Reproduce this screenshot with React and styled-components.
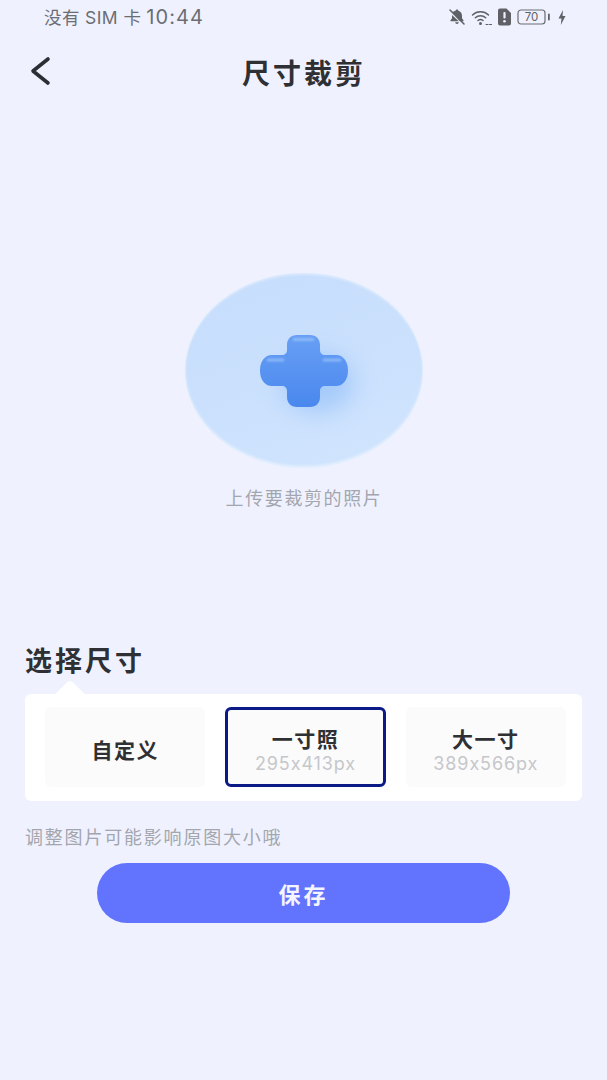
import React, { useState } from 'react';
import styled, { createGlobalStyle } from 'styled-components';

const GlobalStyle = createGlobalStyle`
    html, body {
        margin: 0;
        padding: 0;
        background: #eff2fe;
    }
    * {
        box-sizing: border-box;
    }
`;

const Page = styled.div`
    width: 607px;
    height: 1080px;
    overflow: hidden;
    background: #eff2fe;
    font-family: "Noto Sans CJK SC", "Inter", sans-serif;
    color: #2f3033;
`;

const StatusBar = styled.div`
    height: 34px;
    padding: 0 41px 0 44px;
    display: flex;
    align-items: center;
    justify-content: space-between;
    color: #6b6d73;
`;

const StatusText = styled.div`
    display: flex;
    align-items: baseline;
    gap: 5px;
    padding-bottom: 2px;
    font-size: 17.5px;
    letter-spacing: 0.4px;
    font-family: "Inter", "Noto Sans CJK SC", sans-serif;
`;

const Clock = styled.span`
    font-size: 20px;
    letter-spacing: 1.1px;
`;

const StatusIcons = styled.div`
    display: flex;
    align-items: center;
    gap: 5px;
`;

const Header = styled.header`
    height: 77px;
    display: flex;
    align-items: center;
    justify-content: center;
    position: relative;
`;

const BackButton = styled.button`
    position: absolute;
    left: 29px;
    top: 21px;
    padding: 0;
    border: none;
    background: none;
    display: flex;
    color: #2c2e33;
`;

const Title = styled.h1`
    margin: 0 0 2px;
    font-size: 28px;
    line-height: 40px;
    font-weight: 700;
    letter-spacing: 3px;
    padding-left: 1px;
    color: #2f3033;
`;

const Upload = styled.section`
    margin-top: 162px;
    display: flex;
    flex-direction: column;
    align-items: center;
`;

const UploadCircle = styled.button`
    width: 238px;
    height: 195px;
    padding: 0;
    border: none;
    border-radius: 50%;
    display: flex;
    align-items: center;
    justify-content: center;
    background: linear-gradient(160deg, #c6ddfc 0%, #cbe1fd 60%, #d2e5fe 100%);
    box-shadow: inset 0 -2px 3px rgba(255, 255, 255, 0.5), inset 0 2px 2px rgba(255, 255, 255, 0.35);
`;

const PlusSvg = styled.svg`
    overflow: visible;
`;

const UploadHint = styled.p`
    margin: 17px 0 0;
    font-size: 18px;
    line-height: 24px;
    letter-spacing: 1.6px;
    padding-left: 1px;
    color: #a3a6ae;
`;

const SizeSection = styled.section`
    margin-top: 134px;
    padding: 0 25px;
`;

const SectionTitle = styled.h2`
    margin: 0;
    font-size: 27px;
    line-height: 34px;
    font-weight: 700;
    letter-spacing: 3px;
    color: #2f3033;
`;

const SizeCard = styled.div`
    margin-top: 17px;
    position: relative;
    height: 107px;
    padding: 13px 16px 14px 20px;
    display: grid;
    grid-template-columns: repeat(3, 1fr);
    gap: 20px;
    background: #fff;
    border-radius: 6px;

    &::before {
        content: '';
        position: absolute;
        left: 31px;
        top: -9px;
        width: 28px;
        height: 28px;
        background: #fff;
        border-radius: 5px;
        transform: rotate(45deg);
    }
`;

const SizeTile = styled.button`
    position: relative;
    padding: 7px 0 0;
    font-family: inherit;
    display: flex;
    flex-direction: column;
    align-items: center;
    justify-content: center;
    background: #fbfbfb;
    border-radius: 6px;
    border: 3px solid ${(p) => (p.$active ? '#0b1a86' : 'transparent')};
`;

const SizeName = styled.span`
    font-family: "Inter", "Noto Sans CJK SC", sans-serif;
    font-size: 21px;
    line-height: 25px;
    font-weight: 700;
    letter-spacing: 1.5px;
    color: #2f3033;
`;

const SizeValue = styled.span`
    margin-top: 1px;
    font-family: "Inter", sans-serif;
    font-size: 18px;
    line-height: 22px;
    letter-spacing: 0.9px;
    color: #c6c7cb;
`;

const Note = styled.p`
    margin: 23px 0 0;
    font-size: 18px;
    line-height: 24px;
    letter-spacing: 1.8px;
    color: #a3a6ae;
`;

const SaveButton = styled.button`
    display: block;
    width: 413px;
    height: 60px;
    margin: 15px auto 0;
    border: none;
    border-radius: 30px;
    background: #6274fd;
    color: #f4f5ff;
    font-family: inherit;
    font-size: 22px;
    font-weight: 700;
    letter-spacing: 3px;
`;

const BellOffIcon = () => (
    <svg width="18" height="18" viewBox="0 0 18 18">
        <path d="M9 1.500c.8 0 1.300.5 1.400 1.200 2.200.6 3.600 2.500 3.600 5v2.600l1.500 2v.9H12L4.200 4.600C5 3.600 6.200 3 7.600 2.700 7.700 2 8.200 1.500 9 1.500z" fill="#5f6166" />
        <path d="M4 7l6.800 6.200H2.500v-.9L4 10.300z" fill="#5f6166" />
        <path d="M7.200 14.200h3.600a1.800 1.800 0 0 1-3.600 0z" fill="#5f6166" />
        <path d="M2 2l14 14" stroke="#5f6166" strokeWidth="1.500" strokeLinecap="round" />
    </svg>
);

const WifiIcon = () => (
    <svg width="21" height="17" viewBox="0 0 21 17" fill="none" stroke="#5f6166" strokeWidth="1.500" strokeLinecap="round">
        <path d="M1.500 6C6 1.700 13 1.700 17.500 6" />
        <path d="M4.300 8.800c3-2.800 7.400-2.800 10.400 0" />
        <path d="M7 11.500c1.500-1.300 3.500-1.300 5 0" />
        <circle cx="9.500" cy="14.500" r="1.500" fill="#5f6166" stroke="none" />
        <path d="M15 15.500h2M18.500 15.500h2" strokeWidth="1.200" />
    </svg>
);

const AlertIcon = () => (
    <svg width="15" height="18" viewBox="0 0 15 18">
        <path d="M3 .5h6.500L14 5v10.500a2 2 0 0 1-2 2H3a2 2 0 0 1-2-2v-13a2 2 0 0 1 2-2z" fill="#5f6166" />
        <rect x="6.400" y="4" width="2.200" height="6.500" rx="1" fill="#eff2fe" />
        <circle cx="7.500" cy="13.300" r="1.300" fill="#eff2fe" />
    </svg>
);

const BatteryIcon = () => (
    <svg width="36" height="16" viewBox="0 0 36 16">
        <rect x="1" y="1" width="27" height="14" rx="3" fill="none" stroke="#6b6d73" strokeWidth="1.200" />
        <text x="14.500" y="12.300" textAnchor="middle" fontSize="11.500" fontFamily="Inter, sans-serif" fill="#5f6166">70</text>
        <rect x="31" y="4.500" width="1.800" height="7" rx="0.900" fill="#5f6166" />
    </svg>
);

const BoltIcon = () => (
    <svg width="8" height="15" viewBox="0 0 8 15">
        <path d="M5 0L.5 8.500h3L2.800 15 7.500 6H4.500z" fill="#5f6166" />
    </svg>
);

const BackIcon = () => (
    <svg width="24" height="32" viewBox="0 0 24 32" fill="none" stroke="currentColor" strokeWidth="3.600" strokeLinecap="round" strokeLinejoin="round">
        <path d="M19 4L4 16l15 12" />
    </svg>
);

const PlusIcon = () => (
    <PlusSvg width="88" height="72" viewBox="0 0 88 72">
        <defs>
            <filter id="plusBlur" x="-60%" y="-60%" width="220%" height="220%">
                <feGaussianBlur stdDeviation="11" />
            </filter>
            <filter id="plusGlow" x="-30%" y="-200%" width="160%" height="500%">
                <feGaussianBlur stdDeviation="1.200" />
            </filter>
            <linearGradient id="plusFill" x1="0" y1="0" x2="0" y2="1">
                <stop offset="0" stopColor="#689ff5" />
                <stop offset="1" stopColor="#4a88ee" />
            </linearGradient>
        </defs>
        <ellipse cx="58" cy="48" rx="36" ry="30" fill="#8fbdf8" opacity="0.6" filter="url(#plusBlur)" />
        <path
            d="M27 10C27 4 31 0 37 0H50C56 0 60 4 60 10V15C60 18 62 20 65 20H76C83 20 88 26 88 35.500C88 45 83 51 76 51H65C62 51 60 53 60 56V62C60 68 56 72 50 72H37C31 72 27 68 27 62V56C27 53 25 51 22 51H12C5 51 0 45 0 35.500C0 26 5 20 12 20H22C25 20 27 18 27 15Z"
            fill="url(#plusFill)"
        />
        <path d="M34 4.500H53M8 25H23M64 25H80" stroke="#a9cffb" strokeWidth="2.500" strokeLinecap="round" opacity="0.7" filter="url(#plusGlow)" />
    </PlusSvg>
);

const sizes = [
    { id: 'custom', name: '自定义' },
    { id: 'one', name: '一寸照', value: '295x413px' },
    { id: 'big', name: '大一寸', value: '389x566px' },
];

const App = () => {
    const [selected, setSelected] = useState('one');

    return (
        <Page>
            <GlobalStyle />
            <StatusBar>
                <StatusText>
                    <span>没有 SIM 卡</span>
                    <Clock>10:44</Clock>
                </StatusText>
                <StatusIcons>
                    <BellOffIcon />
                    <WifiIcon />
                    <AlertIcon />
                    <BatteryIcon />
                    <BoltIcon />
                </StatusIcons>
            </StatusBar>
            <Header>
                <BackButton aria-label="返回">
                    <BackIcon />
                </BackButton>
                <Title>尺寸裁剪</Title>
            </Header>
            <Upload>
                <UploadCircle aria-label="上传">
                    <PlusIcon />
                </UploadCircle>
                <UploadHint>上传要裁剪的照片</UploadHint>
            </Upload>
            <SizeSection>
                <SectionTitle>选择尺寸</SectionTitle>
                <SizeCard>
                    {sizes.map((size) => (
                        <SizeTile key={size.id} $active={selected === size.id} onClick={() => setSelected(size.id)}>
                            <SizeName>{size.name}</SizeName>
                            {size.value && <SizeValue>{size.value}</SizeValue>}
                        </SizeTile>
                    ))}
                </SizeCard>
                <Note>调整图片可能影响原图大小哦</Note>
            </SizeSection>
            <SaveButton>保存</SaveButton>
        </Page>
    );
};

export default App;
